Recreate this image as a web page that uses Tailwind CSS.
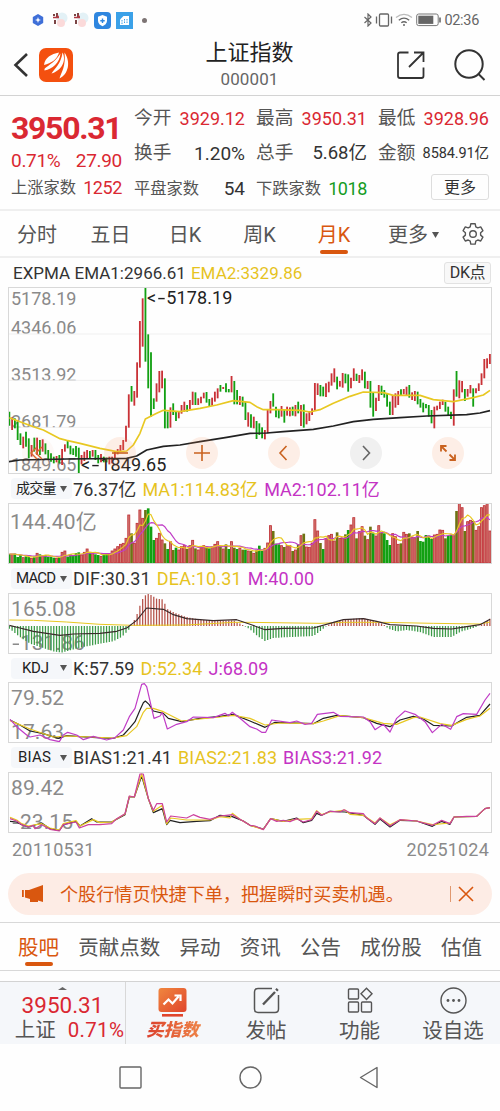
<!DOCTYPE html>
<html lang="zh-CN">
<head>
    <meta charset="UTF-8">
    <meta name="viewport" content="width=device-width, initial-scale=1.0">
    <title>上证指数 000001</title>
    <script src="https://cdn.jsdelivr.net/npm/@tailwindcss/browser@4"></script>
    <style>
        body { font-family: Roboto, 'Noto Sans CJK SC', sans-serif; }
        svg { display: block; flex-shrink: 0; }
    </style>
</head>
<body class="w-[500px] h-[1111px] overflow-hidden bg-[#fefefe] text-[#333] whitespace-nowrap">

    <!-- Status bar -->
    <div class="h-10 flex items-center justify-between pl-8 pr-[21px]">
        <div class="flex items-center gap-[5px]">
            <svg class="w-3 h-3" viewBox="0 0 12 12"><path d="M6 0l5.2 3v6L6 12 .8 9V3z" fill="#3f6fd8"/><path d="M6 3l.8 2.2L9 6l-2.2.8L6 9l-.8-2.2L3 6l2.2-.8z" fill="#fff"/></svg>
            <svg class="w-4 h-4 ml-[3px]" viewBox="0 0 16 16"><circle cx="10" cy="6" r="5.500" fill="#e3f1f6"/><circle cx="9" cy="11" r="4" fill="#fbdada"/><path d="M1 2h2v2H1zM4 1h2v4H4zM2 8h2v4H2z" fill="#7a4444"/><path d="M1 5.500h6M5 3l1.500 2" stroke="#b03a44" stroke-width="1.300"/></svg>
            <svg class="w-4 h-4" viewBox="0 0 16 16"><circle cx="10" cy="6" r="5.500" fill="#e3f1f6"/><circle cx="9" cy="11" r="4" fill="#fbdada"/><path d="M1 2h2v2H1zM4 1h2v4H4zM2 8h2v4H2z" fill="#7a4444"/><path d="M1 5.500h6M5 3l1.500 2" stroke="#b03a44" stroke-width="1.300"/></svg>
            <svg class="w-[17px] h-[17px]" viewBox="0 0 17 17"><rect width="17" height="17" rx="4" fill="#2f86df"/><path d="M8.500 3l4.500 1.800v4c0 2.700-2.200 4.500-4.500 5.400C6.200 13.300 4 11.500 4 8.800v-4z" fill="#fff"/><path d="M8.500 6.500v4.400M6.300 8.700h4.400" stroke="#2f86df" stroke-width="1.400"/></svg>
            <svg class="w-[17px] h-[17px]" viewBox="0 0 17 17"><rect width="17" height="17" fill="#3ba1e8"/><path d="M4 7.500L7.500 4H13v9H4z" fill="#fff"/><path d="M6 8v4M8.500 7v5M11 7v5" stroke="#3ba1e8" stroke-dasharray="1.500 1"/></svg>
            <div class="w-[5px] h-[5px] rounded-full bg-[#7d7474] ml-1"></div>
        </div>
        <div class="flex items-center text-[#666]">
            <svg class="w-[10px] h-[14px]" viewBox="0 0 10 14" fill="none" stroke="#666" stroke-width="1.200"><path d="M1.500 4l6.500 6-3 3V1l3 3-6.500 6"/></svg>
            <svg class="w-[18px] h-[14px] ml-[2px]" viewBox="0 0 18 14" fill="none" stroke="#666" stroke-width="1.300"><rect x="4.500" y="1" width="9" height="12" rx="1"/><path d="M1.500 3.500v7M16.500 3.500v7"/></svg>
            <svg class="w-[18px] h-[14px] ml-[2px]" viewBox="0 0 18 14" fill="none" stroke-width="1.300"><path d="M1 4.500c5-4 11-4 16 0" stroke="#bbb"/><path d="M3.800 7.200c3.200-2.600 7.200-2.600 10.400 0M6.300 9.800c1.700-1.300 3.700-1.300 5.400 0" stroke="#666"/><circle cx="9" cy="12" r="1" fill="#666"/></svg>
            <svg class="w-[25px] h-[14px] ml-[3px]" viewBox="0 0 25 14"><rect x=".7" y="1" width="21.500" height="11.600" rx="2" fill="none" stroke="#777"/><rect x="2.300" y="2.700" width="15" height="8.200" fill="#666"/><path d="M24 4.500v5" stroke="#666" stroke-width="1.600"/></svg>
            <span class="text-[14.5px] tracking-[-0.3px] ml-[3px] pt-px">02:36</span>
        </div>
    </div>

    <!-- Header -->
    <header class="h-14 flex items-center justify-between pl-[13px] pr-[14px] border-b border-[#d3d3d3]">
        <div class="flex items-center w-[105px] pb-[6px]">
            <svg class="w-4 h-7" viewBox="0 0 16 28" fill="none" stroke="#333" stroke-width="2.600"><path d="M14 3L2.500 14 14 25"/></svg>
            <svg class="w-[34px] h-[34px] ml-[10px]" viewBox="0 0 34 34"><rect width="34" height="34" rx="7" fill="#f4500f"/><g fill="#fff"><path d="M5 17C6 9.500 12 6 20 4.500 18.500 11 12 15.500 5 17z"/><path d="M5.500 21C6 18.800 15 16 21.500 5.500 20.500 15 13.500 21 5.500 22.500z"/><path d="M12.500 25.500C16 20 22 16 23.500 4.500 28 13 22 23 12.500 25.500z"/><path d="M20.500 30.500C22.500 24 27 18 25.500 4.500 32 14 29.500 26 20.500 30.500z"/></g></svg>
        </div>
        <div class="flex flex-col items-center pb-[5px]">
            <h1 class="text-[22px] leading-[28px] text-[#222]">上证指数</h1>
            <p class="text-[17px] leading-[24px] tracking-[0.1px] text-[#666]">000001</p>
        </div>
        <div class="flex items-center justify-end w-[105px] gap-7 pb-[6px]">
            <svg class="w-[30px] h-[30px]" viewBox="0 0 30 30" fill="none" stroke="#333" stroke-width="1.800"><path d="M12.500 2.500H4Q2 2.500 2 4.500V26Q2 28 4 28H25.500Q27.500 28 27.500 26V17.500M18 2.500h9.500v9.500M27.500 2.500L13 17"/></svg>
            <svg class="w-8 h-8" viewBox="0 0 32 32" fill="none" stroke="#333" stroke-width="2"><circle cx="15" cy="15" r="13.700"/><path d="M24.500 25l6 6"/></svg>
        </div>
    </header>

    <!-- Quote -->
    <section class="h-[115px] flex gap-[11px] pl-[11px] border-b-2 border-[#efefef]">
        <div class="w-[111px] mr-px pt-[13px] text-[#da2832]">
            <div class="text-[32px] leading-[38px] font-bold tracking-[-1.3px]">3950.31</div>
            <div class="flex justify-between text-[19px] leading-7 tracking-[-0.3px]"><span>0.71%</span><span>27.90</span></div>
            <div class="flex justify-between items-center leading-[26px]"><span class="text-[16.3px] text-[#555]">上涨家数</span><span class="text-[18px] tracking-[-0.4px]">1252</span></div>
        </div>
        <div class="w-[111px] pt-[5px] text-[18px] leading-[35px]">
            <div class="flex justify-between"><span class="text-[18.7px] text-[#555]">今开</span><span class="text-[#da2832]">3929.12</span></div>
            <div class="flex justify-between"><span class="text-[18.7px] text-[#555]">换手</span><span class="text-[19px]">1.20%</span></div>
            <div class="flex justify-between"><span class="text-[16.3px] text-[#555]">平盘家数</span><span class="text-[19px]">54</span></div>
        </div>
        <div class="w-[111px] pt-[5px] text-[18px] leading-[35px]">
            <div class="flex justify-between"><span class="text-[18.7px] text-[#555]">最高</span><span class="text-[#da2832]">3950.31</span></div>
            <div class="flex justify-between"><span class="text-[18.7px] text-[#555]">总手</span><span class="text-[18.5px]">5.68亿</span></div>
            <div class="flex justify-between"><span class="text-[16.3px] text-[#555]">下跌家数</span><span class="text-[#159c1f] tracking-[-0.4px]">1018</span></div>
        </div>
        <div class="w-[111px] pt-[5px] text-[18px] leading-[35px]">
            <div class="flex justify-between"><span class="text-[18.7px] text-[#555]">最低</span><span class="text-[#da2832]">3928.96</span></div>
            <div class="flex justify-between"><span class="text-[18.7px] text-[#555]">金额</span><span class="text-[14.5px] tracking-[-0.1px]">8584.91亿</span></div>
            <div class="w-[58px] h-[26px] mt-[3px] ml-auto border border-[#ddd] rounded-[3px] text-base leading-[25px] text-center">更多</div>
        </div>
    </section>

    <!-- Period tabs -->
    <nav class="h-[47px] flex items-center border-b-2 border-[#efefef] text-[20px] leading-[44px] text-[#555]">
        <div class="w-[74px] pt-[2px] text-center">分时</div>
        <div class="w-[73px] pt-[2px] text-center">五日</div>
        <div class="w-[76px] pt-[2px] text-center">日K</div>
        <div class="w-[73px] pt-[2px] text-center">周K</div>
        <div class="w-[76px] pt-[2px] text-center text-[#d9570f] relative">月K<span class="absolute left-6 bottom-[3px] w-7 h-1 rounded-full bg-[#d9570f]"></span></div>
        <div class="w-[80px] pt-[2px] pl-[16px] flex items-center gap-1">更多<svg class="w-[7px] h-2" viewBox="0 0 7 8"><path d="M0 1h7L3.500 7z" fill="#555"/></svg></div>
        <svg class="w-6 h-6 ml-[9px]" viewBox="0 0 24 24" fill="none" stroke="#555" stroke-width="1.400" stroke-linejoin="round"><path d="M9.800 1.800h4.400l.6 3 2 1.100 2.900-1 2.200 3.800-2.300 2v2.400l2.300 2-2.200 3.900-2.900-1-2 1.100-.6 3H9.800l-.6-3-2-1.100-2.900 1-2.200-3.900 2.300-2v-2.400l-2.300-2 2.200-3.800 2.900 1 2-1.100z"/><circle cx="12" cy="12" r="3.300"/></svg>
    </nav>

    <main class="px-2">
        <!-- K line -->
        <div class="h-[29px] flex items-center justify-between pl-[5px] pr-[1px]">
            <div class="flex gap-[5px] text-[17px] tracking-[0.02px] pt-[3px]"><span>EXPMA EMA1:2966.61</span><span class="text-[#e6c31e]">EMA2:3329.86</span></div>
            <div class="w-[47px] h-[22px] rounded-[3px] border border-[#e2e2e2] bg-[#f8f8f8] text-base leading-5 text-center tracking-[-0.4px]">DK点</div>
        </div>
        <div class="relative h-[187px] w-[484px] border border-[#d8d8d8] text-[18px] leading-6 text-[#8a8a8a]">
            <div class="absolute left-[2px] top-[-1px]">5178.19</div>
            <div class="absolute left-[2px] top-[28px]">4346.06</div>
            <div class="absolute left-[2px] top-[75px]">3513.92</div>
            <div class="absolute left-[2px] top-[122px]">2681.79</div>
            <div class="absolute left-[2px] top-[165px]">1849.65</div>
            <svg id="kline" class="absolute inset-0 w-[482px] h-[185px]" viewBox="27 99 1446 555" preserveAspectRatio="none" fill="none"></svg>
            <div class="absolute left-[138px] top-[-2px] text-[#222] tracking-[0.1px]">&lt;<span class="inline-block scale-x-150 mx-[2.5px]">-</span>5178.19</div>
            <div class="absolute left-[72px] top-[165px] text-[#222] tracking-[0.1px]">&lt;<span class="inline-block scale-x-150 mx-[2.5px]">-</span>1849.65</div>

            <!-- chart controls -->
            <div class="absolute left-[13px] top-[149px] flex gap-[50px]">
                <div class="w-8 h-8 rounded-full bg-[#f5935c]/5"><svg class="w-8 h-8" viewBox="0 0 32 32" fill="none" stroke="#d9682a" stroke-width="1.400"><path d="M15 10l-6 6 6 6M20 10l-6 6 6 6"/></svg></div>
                <div class="w-8 h-8 rounded-full bg-[#f5935c]/15"><svg class="w-8 h-8" viewBox="0 0 32 32" stroke="#c9621f" stroke-width="1.600"><path d="M8 16h16"/></svg></div>
                <div class="w-8 h-8 rounded-full bg-[#f5935c]/15"><svg class="w-8 h-8" viewBox="0 0 32 32" stroke="#c9621f" stroke-width="1.600"><path d="M8 16h16M16 8v16"/></svg></div>
                <div class="w-8 h-8 rounded-full bg-[#f5935c]/15"><svg class="w-8 h-8" viewBox="0 0 32 32" fill="none" stroke="#c9621f" stroke-width="1.600"><path d="M18.500 9L12 16l6.500 7"/></svg></div>
                <div class="w-8 h-8 rounded-full bg-[#888]/12"><svg class="w-8 h-8" viewBox="0 0 32 32" fill="none" stroke="#666" stroke-width="1.600"><path d="M13 9l6.500 7-6.500 7"/></svg></div>
                <div class="w-8 h-8 rounded-full bg-[#f5935c]/15"><svg class="w-8 h-8" viewBox="0 0 32 32" fill="none" stroke="#c9621f" stroke-width="1.800"><path d="M14.500 9H9v5.500M9 9l5.500 5.500M17.500 23H23v-5.500M23 23l-5.500-5.500"/></svg></div>
            </div>
        </div>

        <!-- Volume -->
        <div class="h-[29px] flex items-center text-[18px]">
            <div class="w-[61px] h-[21px] ml-[3px] mr-[1px] px-[5px] flex items-center justify-between rounded bg-[#f5f7fa] text-[14px] text-[#222] tracking-[-0.8px]">成交量<svg class="w-[7px] h-2" viewBox="0 0 7 8"><path d="M0 1h7L3.500 7z" fill="#555"/></svg></div>
            <div class="flex gap-[6px] tracking-[0.03px] pt-px"><span>76.37亿</span><span class="text-[#e6c31e]">MA1:114.83亿</span><span class="text-[#c433c4]">MA2:102.11亿</span></div>
        </div>
        <div class="relative h-[61px] w-[484px] border border-[#d8d8d8] text-[21px] leading-6 tracking-[0.2px] text-[#8a8a8a]">
            <div class="absolute left-[1px] top-[6px]">144.40亿</div>
            <svg id="vol" class="absolute inset-0 w-[482px] h-[59px]" viewBox="27 87 1446 177" preserveAspectRatio="none" fill="none"></svg>
        </div>

        <!-- MACD -->
        <div class="h-[29px] flex items-center text-[18px]">
            <div class="w-[61px] h-[21px] ml-[3px] mr-[1px] px-[5px] flex items-center justify-between rounded bg-[#f5f7fa] text-[15px] text-[#222] tracking-[-0.8px]">MACD<svg class="w-[7px] h-2" viewBox="0 0 7 8"><path d="M0 1h7L3.500 7z" fill="#555"/></svg></div>
            <div class="flex gap-[6px] tracking-[0.18px]"><span>DIF:30.31</span><span class="text-[#e6c31e]">DEA:10.31</span><span class="text-[#c433c4]">M:40.00</span></div>
        </div>
        <div class="relative h-[61px] w-[484px] border border-[#d8d8d8] text-[21px] leading-6 tracking-[0.1px] text-[#8a8a8a]">
            <div class="absolute left-[2px] top-[3px]">165.08</div>
            <div class="absolute left-[2px] top-[37px]"><span class="inline-block scale-x-125 mx-[1.5px]">-</span>131.86</div>
            <svg id="macd" class="absolute inset-0 w-[482px] h-[59px]" viewBox="27 356 1446 177" preserveAspectRatio="none" fill="none"></svg>
        </div>

        <!-- KDJ -->
        <div class="h-[28px] flex items-center text-[18px]">
            <div class="w-[61px] h-[21px] ml-[3px] mr-[1px] pl-[11px] pr-[5px] flex items-center justify-between rounded bg-[#f5f7fa] text-[15px] text-[#222] tracking-[-0.3px]">KDJ<svg class="w-[7px] h-2" viewBox="0 0 7 8"><path d="M0 1h7L3.500 7z" fill="#555"/></svg></div>
            <div class="flex gap-[6px] tracking-[0.08px]"><span>K:57.59</span><span class="text-[#e6c31e]">D:52.34</span><span class="text-[#c433c4]">J:68.09</span></div>
        </div>
        <div class="relative h-[61px] w-[484px] border border-[#d8d8d8] text-[21px] leading-6 tracking-[0.1px] text-[#8a8a8a]">
            <div class="absolute left-[2px] top-[3px]">79.52</div>
            <div class="absolute left-[2px] top-[37px]">17.63</div>
            <svg id="kdj" class="absolute inset-0 w-[482px] h-[59px]" viewBox="27 84 1446 177" preserveAspectRatio="none" fill="none"></svg>
        </div>

        <!-- BIAS -->
        <div class="h-[29px] flex items-center text-[18px]">
            <div class="w-[61px] h-[21px] ml-[3px] mr-[1px] pl-[7px] pr-[5px] flex items-center justify-between rounded bg-[#f5f7fa] text-[15px] text-[#222] tracking-[0.2px]">BIAS<svg class="w-[7px] h-2" viewBox="0 0 7 8"><path d="M0 1h7L3.500 7z" fill="#555"/></svg></div>
            <div class="flex gap-[6px] tracking-[0.06px]"><span>BIAS1:21.41</span><span class="text-[#e6c31e]">BIAS2:21.83</span><span class="text-[#c433c4]">BIAS3:21.92</span></div>
        </div>
        <div class="relative h-[61px] w-[484px] border border-[#d8d8d8] text-[21px] leading-6 tracking-[0.1px] text-[#8a8a8a]">
            <div class="absolute left-[2px] top-[3px]">89.42</div>
            <div class="absolute left-[2px] top-[37px]"><span class="inline-block scale-x-125 mx-[1.5px]">-</span>23.15</div>
            <svg id="bias" class="absolute inset-0 w-[482px] h-[59px]" viewBox="27 353 1446 177" preserveAspectRatio="none" fill="none"></svg>
        </div>

        <div class="h-[40px] flex justify-between pl-1 pr-[3px] pt-[5px] text-[18px] leading-6 tracking-[0.2px] text-[#8a8a8a]"><span>20110531</span><span>20251024</span></div>

        <!-- Notice -->
        <div class="h-[42px] w-[484px] rounded-full bg-[#fdece5] flex items-center pl-[13px] pr-[18px] text-[#d9570f]">
            <svg class="w-[23px] h-[20px]" viewBox="0 0 23 20" fill="#d9570f"><path d="M1 6h1.800v7H1zM4 6h4l14-5v17l-5-1.600V18H9v-3L4 13.500z"/></svg>
            <span class="text-[18.1px] ml-4 pt-[2px]">个股行情页快捷下单，把握瞬时买卖机遇。</span>
            <span class="w-px h-4 bg-[#e0986f] ml-auto"></span>
            <svg class="w-4 h-4 ml-[7px]" viewBox="0 0 16 16" stroke="#d9570f" stroke-width="1.600"><path d="M1 1l14 14M15 1L1 15"/></svg>
        </div>
    </main>

    <!-- Content tabs -->
    <nav class="mt-[7px] h-[49px] flex justify-between px-[18px] border-y border-[#d8d8d8] text-[20.5px] leading-[50px] text-[#555]">
        <div class="relative h-[47px] text-[#d9570f]">股吧<span class="absolute left-[7px] bottom-1 w-7 h-1 rounded-full bg-[#d9570f]"></span></div>
        <div>贡献点数</div>
        <div>异动</div>
        <div>资讯</div>
        <div>公告</div>
        <div>成份股</div>
        <div>估值</div>
    </nav>

    <!-- Bottom bar -->
    <footer class="mt-[10px] h-[63px] flex border-t border-[#d3d3d3] bg-[#f5f7fa] text-[20.5px] text-[#555]">
        <div class="w-[126px] border-r border-[#d8d8d8] flex flex-col items-center">
            <svg class="w-[9px] h-[3px] mt-[5px]" viewBox="0 0 9 3"><path d="M0 3l4.500-3L9 3z" fill="#666"/></svg>
            <div class="text-[22.5px] leading-[30px] text-[#da2832]">3950.31</div>
            <div class="flex gap-3 leading-5 pl-[14px]"><span>上证</span><span class="text-[#da2832] tracking-[0.3px]">0.71%</span></div>
        </div>
        <div class="w-[93px] flex flex-col items-center">
            <svg class="w-[29px] h-[30px] mt-[5px]" viewBox="0 0 29 30"><defs><linearGradient id="buy" x1="0" y1="0" x2="1" y2="1"><stop offset="0" stop-color="#f0873f"/><stop offset="1" stop-color="#e0452c"/></linearGradient></defs><rect x=".5" y="1" width="28" height="24" rx="3" fill="url(#buy)"/><path d="M5.500 17.500l5-5 4 4 6-7M16.500 8.500h6V14" fill="none" stroke="#fff" stroke-width="2.200"/><path d="M4 28.300h21" stroke="#e0452c" stroke-width="2.600"/></svg>
            <span class="text-[17.5px] leading-[27px] font-black italic bg-linear-to-r from-[#d9382b] to-[#ee8548] bg-clip-text text-transparent px-1">买指数</span>
        </div>
        <div class="w-[94px] flex flex-col items-center">
            <svg class="w-[27px] h-[27px] mt-[5px]" viewBox="0 0 27 27" fill="none" stroke="#555" stroke-width="1.500"><path d="M19 1.500H5Q1.500 1.500 1.500 5V22Q1.500 25.500 5 25.500H22Q25.500 25.500 25.500 22V8"/><path d="M10 17.500L22 5" stroke-width="2.400"/><path d="M23.200 3.500l1.500-1.500" stroke-width="2.800"/></svg>
            <span class="leading-[34px]">发帖</span>
        </div>
        <div class="w-[93px] flex flex-col items-center">
            <svg class="w-[26px] h-[27px] mt-[5px]" viewBox="0 0 26 27" fill="none" stroke="#555" stroke-width="1.400"><rect x="1.500" y="2" width="10" height="10" rx="1"/><rect x="1.500" y="15" width="10" height="10" rx="1"/><rect x="14.500" y="15" width="10" height="10" rx="1"/><path d="M19.500 1.200l5.500 5.600-5.500 5.600L14 6.800z"/></svg>
            <span class="leading-[34px]">功能</span>
        </div>
        <div class="w-[94px] flex flex-col items-center">
            <svg class="w-[27px] h-[27px] mt-[5px]" viewBox="0 0 27 27" fill="none" stroke="#555" stroke-width="1.400"><circle cx="13.500" cy="13.500" r="12.500"/><g fill="#555" stroke="none"><circle cx="8" cy="13.500" r="1.400"/><circle cx="13.500" cy="13.500" r="1.400"/><circle cx="19" cy="13.500" r="1.400"/></g></svg>
            <span class="leading-[34px]">设自选</span>
        </div>
    </footer>

    <!-- System navigation -->
    <div class="h-[67px] flex items-center justify-center gap-[97px]">
        <svg class="w-[23px] h-[23px]" viewBox="0 0 23 23" fill="none" stroke="#666" stroke-width="1.400"><rect x="1" y="1" width="21" height="21" rx="1"/></svg>
        <svg class="w-[23px] h-[23px]" viewBox="0 0 23 23" fill="none" stroke="#666" stroke-width="1.400"><circle cx="11.500" cy="11.500" r="10.500"/></svg>
        <svg class="w-[23px] h-[23px]" viewBox="0 0 23 23" fill="none" stroke="#666" stroke-width="1.400" stroke-linejoin="round"><path d="M18 1.500v20L1.500 11.500z"/></svg>
    </div>

    <script>
        const STEP = 8.333, X0 = 28;
        const RED = '#c93237', GREEN = '#12a012', YELLOW = '#e8c822', MAGENTA = '#c03cc6', BLACK = '#222';

        // one entry per month: high, low, direction
        const candles = `470,512,g 487,525,r 490,520,g 500,555,g 535,570,g 545,580,r 530,575,g 550,610,g 570,605,r 548,590,g
        548,600,r 555,600,g 553,590,r 565,598,g 585,615,g 595,620,g 605,625,g 603,622,r 600,625,g 582,630,r
        568,590,r 555,580,g 572,598,g 580,600,g 573,605,g 578,655,g 600,628,r 590,618,r 585,612,r 588,612,g
        585,605,r 585,615,g 600,625,g 597,622,r 605,622,g 608,622,g 605,628,r 605,625,r 590,612,r 582,598,r
        570,590,r 555,585,r 512,560,r 418,518,r 393,440,g 408,452,r 322,428,r 198,338,r 130,275,r 98,320,g
        238,400,g 292,485,g 430,462,g 385,440,r 348,412,r 347,400,r 370,520,g 470,520,g 457,518,r 445,480,g
        470,498,g 468,490,r 450,476,r 440,470,r 450,470,g 435,463,r 410,450,r 412,450,g 430,450,r 425,445,r
        413,430,r 411,443,g 432,456,g 428,452,r 410,440,r 400,430,r 390,410,g 396,402,r 385,412,g 402,412,g
        363,412,r 378,448,g 405,448,g 423,450,r 425,455,g 440,495,g 472,515,r 478,518,g 485,520,r 498,552,g
        505,540,g 517,550,g 525,553,r 462,535,r 438,475,r 415,455,g 455,487,g 462,490,g 453,485,r 465,503,g
        455,482,r 457,484,r 455,482,g 450,484,r 440,475,g 450,513,r 448,518,g 475,508,r 468,498,r 460,480,r
        384,468,r 385,420,r 390,424,g 395,424,g 385,426,r 380,412,r 355,392,r 340,382,r 365,403,g 378,395,r
        354,398,r 356,385,g 358,410,g 368,400,r 340,378,r 356,378,g 360,384,r 343,376,r 350,400,g 378,402,r
        378,458,g 413,485,g 428,468,r 390,438,r 392,420,g 405,428,g 415,455,g 440,480,g 420,480,r 415,458,r
        408,450,r 403,420,g 402,418,r 395,420,r 390,428,g 412,435,r 408,438,r 410,448,g 432,458,g 443,472,g
        447,460,g 450,485,g 465,505,g 455,520,r 452,466,r 440,462,r 434,450,r 440,470,g 455,482,g 470,492,g
        403,512,r 348,425,g 376,430,r 378,412,r 402,438,g 402,425,r 390,415,r 400,455,g 400,415,r 385,408,r
        355,390,r 312,370,r 310,340,r 297,327,r`.split(/\s+/).map(c => {
            const [top, bottom, dir] = c.split(',');
            return { top: +top, bottom: +bottom, up: dir === 'r' };
        });

        const volumes = [
            237,238,236,246,240,248,244,246,250,245, 235,238,243,240,246,246,248,250,246,232,
            228,245,238,240,234,232,240,232,222,232, 236,238,240,244,238,236,238,228,222,215,
            208,205,190,120,175,205,145,105,130,105, 100,155,195,190,175,195,205,222,200,225,
            218,225,215,212,222,212,196,220,225,218, 212,215,220,216,208,200,215,222,208,222,
            200,218,222,220,224,224,228,228,235,226, 212,228,220,204,152,168,206,208,212,216,
            212,212,228,225,208,182,176,216,217,204, 134,168,204,222,190,182,178,198,172,190,
            190,178,165,150,128,190,170,155,182,194, 155,175,183,152,174,175,195,210,176,185,
            208,205,172,178,175,186,188,168,198,200, 180,182,192,180,178,165,166,190,182,180,
            182,108,86,98,168,140,136,138,166,155, 98,92,86,168
        ];

        function parse(points) {
            return points.trim().split(/\s+/).map(p => p.split(',').map(Number));
        }

        // linear value of a point list at x
        function at(list, x) {
            for (let i = 1; i < list.length; i++) {
                if (x <= list[i][0]) {
                    const [x1, y1] = list[i - 1], [x2, y2] = list[i];
                    return y1 + (y2 - y1) * (x - x1) / (x2 - x1);
                }
            }
            return list[list.length - 1][1];
        }

        function line(points, color, width = 3.6) {
            return `<polyline points="${points}" stroke="${color}" stroke-width="${width}" stroke-linejoin="round"/>`;
        }

        function average(n) {
            return volumes.map((v, i) => {
                const part = volumes.slice(Math.max(0, i - n + 1), i + 1);
                return `${X0 + i * STEP},${part.reduce((a, b) => a + b) / part.length}`;
            }).join(' ');
        }

        // K line
        let out = '';
        [237, 376, 517].forEach(y => out += `<path d="M27 ${y}H1473" stroke="#f0f0f0" stroke-width="3"/>`);
        candles.forEach((c, i) => {
            const x = X0 + i * STEP;
            out += `<path d="M${x} ${c.top}V${c.bottom}" stroke="${c.up ? RED : GREEN}" stroke-width="5.500"/>`;
        });
        out += line('25,620 60,615 200,612 380,610 410,603 440,585 490,574 540,570 600,560 680,547 750,535 800,534 850,530 940,523 1000,513 1060,500 1120,493 1200,488 1280,483 1400,479 1440,474 1470,467', BLACK, 5);
        out += line('28,488 60,500 100,515 130,525 180,551 200,556 240,565 300,580 350,590 380,588 400,570 420,535 436,492 470,475 490,466 540,470 600,460 650,450 700,437 750,442 770,455 790,464 830,464 900,466 930,471 960,464 1000,445 1050,424 1090,411 1150,413 1180,421 1260,421 1300,434 1360,440 1420,428 1450,420 1470,406', YELLOW, 5);
        document.getElementById('kline').innerHTML = out;

        // Volume
        out = '';
        volumes.forEach((v, i) => {
            const x = X0 + i * STEP;
            if (candles[i].up) {
                out += `<rect x="${x - 3}" y="${v}" width="6" height="${264 - v}" fill="#d07a72" stroke="#c02f35" stroke-width="2.500"/>`;
            } else {
                const mixed = i > 40 && candles[i - 1].up;
                out += `<rect x="${x - 4}" y="${v}" width="8" height="${264 - v}" fill="${mixed ? '#6d7313' : GREEN}"/>`;
            }
        });
        out += line(average(10), MAGENTA, 3.5) + line(average(5), YELLOW, 3.5);
        document.getElementById('vol').innerHTML = out;

        // MACD
        const hist = parse('28,460 60,485 90,505 120,515 160,528 185,532 210,525 250,515 300,505 340,498 365,485 385,465 395,450 410,420 425,375 440,355 450,357 470,370 490,372 500,400 530,415 560,425 600,433 650,437 700,435 725,447 750,462 770,480 795,497 820,488 850,486 900,484 940,482 960,468 980,452 1000,440 1040,432 1090,428 1120,436 1150,446 1165,460 1190,468 1220,464 1260,470 1300,485 1355,485 1380,470 1420,458 1440,450 1460,438 1470,430');
        out = '';
        candles.forEach((c, i) => {
            const x = X0 + i * STEP, y = at(hist, x);
            out += `<path d="M${x} 452V${y}" stroke="${y < 452 ? '#b5534a' : '#3c9a48'}" stroke-width="3.800"/>`;
        });
        out += line('28,434 100,435 200,440 300,447 400,450 560,449 700,441 750,441 960,444 1030,441 1150,441 1300,444 1440,446 1470,440', YELLOW, 3);
        out += line('28,450 60,458 100,468 180,480 220,476 300,474 350,468 380,458 410,435 440,398 490,402 520,418 560,430 640,436 710,433 750,447 795,463 850,459 940,458 990,444 1030,433 1090,430 1130,438 1170,448 1250,452 1300,459 1355,461 1400,454 1440,448 1470,432', '#3a2a2a', 3.4);
        document.getElementById('macd').innerHTML = out;

        // KDJ
        out = line('30,195 60,210 90,228 130,236 175,250 200,242 240,245 290,248 340,250 370,240 390,218 405,200 420,165 430,143 436,138 447,148 460,168 490,175 505,190 545,200 600,190 660,184 700,178 750,198 795,217 825,202 940,206 970,190 1010,181 1090,188 1130,205 1170,215 1200,195 1240,184 1270,192 1300,211 1355,213 1380,198 1400,187 1440,181 1470,147', BLACK);
        out += line('30,197 90,222 160,246 200,243 340,249 380,242 410,215 430,172 440,160 460,160 490,170 545,198 600,192 660,186 700,181 750,190 795,210 840,204 940,206 970,198 1020,182 1090,188 1150,205 1190,208 1240,188 1260,186 1320,206 1355,211 1400,193 1440,183 1470,160', YELLOW);
        out += line('30,193 50,215 80,240 90,246 120,240 150,254 178,260 190,240 203,232 230,240 250,254 280,244 320,255 345,248 370,225 388,185 405,160 425,88 433,86 440,95 462,190 480,183 487,173 502,222 530,208 560,200 580,186 640,188 675,175 685,182 697,172 720,190 750,215 770,222 785,232 797,232 815,195 870,203 890,198 915,208 935,205 952,178 1000,172 1020,184 1090,186 1110,200 1125,224 1150,208 1170,231 1190,190 1215,168 1245,178 1275,200 1297,233 1325,208 1352,223 1370,185 1390,176 1430,178 1455,135 1470,115', MAGENTA);
        document.getElementById('kdj').innerHTML = out;

        // BIAS
        out = line('30,498 50,500 65,508 85,515 125,503 150,520 178,525 190,508 228,498 240,512 275,490 290,500 335,500 375,478 388,425 403,425 425,362 445,430 460,472 487,460 500,508 510,495 540,502 590,498 630,496 660,480 697,484 730,497 750,510 790,521 812,490 850,498 890,488 910,502 935,495 950,474 965,480 990,468 1035,470 1090,480 1125,507 1140,491 1170,515 1200,495 1250,497 1297,513 1325,498 1350,507 1362,485 1430,483 1455,460 1470,457', BLACK);
        out += line('30,486 50,494 65,505 85,512 125,505 150,518 178,524 190,505 228,496 240,512 280,493 300,502 335,500 375,476 388,423 403,425 425,356 445,430 460,468 487,450 500,506 512,488 560,494 630,494 660,484 690,488 697,474 720,492 750,510 790,522 812,490 850,498 890,492 935,490 950,466 965,478 990,470 1035,464 1050,477 1090,480 1125,503 1140,488 1170,508 1200,493 1250,497 1297,508 1350,503 1362,485 1430,483 1455,460 1470,457', YELLOW);
        out += line('30,490 50,497 65,508 85,515 100,510 105,520 125,508 150,522 178,527 190,508 228,500 238,518 265,508 300,508 335,505 350,490 375,475 388,422 403,425 420,356 430,356 445,430 460,465 470,445 487,445 500,500 512,482 560,488 580,478 600,486 630,492 660,482 697,478 720,492 750,510 765,512 790,523 812,490 830,498 850,495 870,499 890,490 910,500 935,493 950,468 965,480 990,468 1020,470 1032,463 1050,472 1090,475 1100,488 1125,505 1140,488 1170,512 1200,493 1250,497 1297,510 1325,495 1350,505 1362,485 1400,483 1430,483 1455,460 1470,457', '#cc409e');
        document.getElementById('bias').innerHTML = out;
    </script>
</body>
</html>
